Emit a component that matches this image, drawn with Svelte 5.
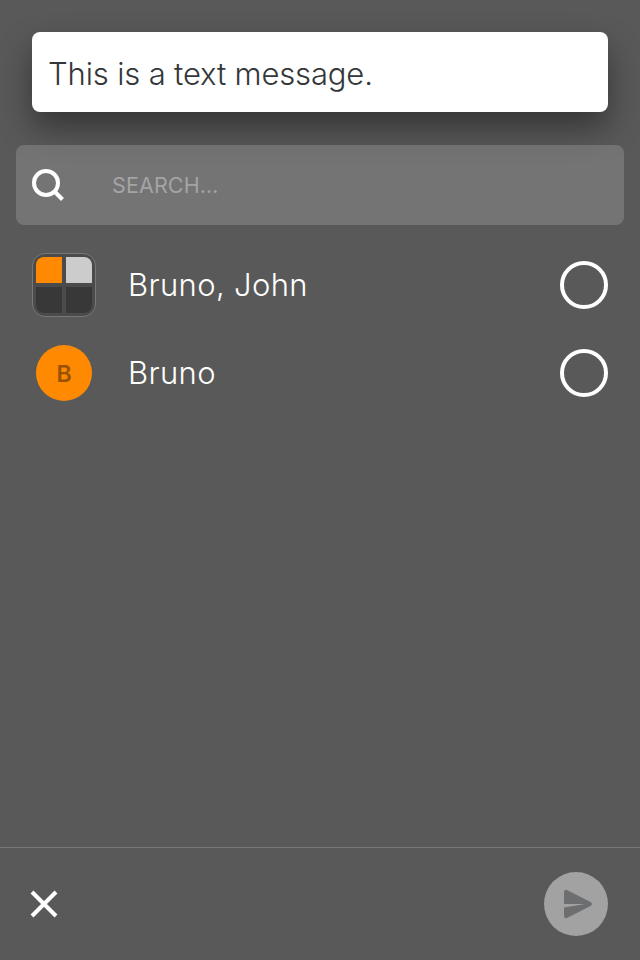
<script>
  const conversations = [
    { name: 'Bruno, John', group: true },
    { name: 'Bruno', group: false, initial: 'B' }
  ];
  let query = $state('');
</script>

<main class="share">
  <section class="preview"><span>This is a text message.</span></section>

  <label class="search">
    <svg width="34" height="34" viewBox="0 0 34 34" fill="none" stroke="#fff" stroke-width="4">
      <circle cx="15" cy="15" r="12" />
      <path d="M23.5 23.5L31.5 31.5" />
    </svg>
    <input type="text" placeholder="SEARCH…" aria-label="Search" bind:value={query} />
  </label>

  <ul class="list">
    {#each conversations as item}
      <li class="row">
        <div class="avatar">
          {#if item.group}
            <div class="grid"><i class="orange"></i><i class="light"></i><i></i><i></i></div>
          {:else}
            <div class="round">{item.initial}</div>
          {/if}
        </div>
        <span class="name">{item.name}</span>
        <span class="check"></span>
      </li>
    {/each}
  </ul>

  <footer class="bar">
    <button class="close" aria-label="Close">
      <svg width="28" height="28" viewBox="0 0 28 28" fill="none" stroke="#fff" stroke-width="4">
        <path d="M2 2L26 26M26 2L2 26" />
      </svg>
    </button>
    <button class="send" aria-label="Send">
      <svg width="64" height="64" viewBox="0 0 64 64" fill="#6c6e6f">
        <path d="M20 32V20.5Q20 16.8 23.5 18.3L46.5 30.1Q49.5 32 46.5 33.9L23.5 45.7Q20 47.2 20 43.5V35.5L41 32Z" />
      </svg>
    </button>
  </footer>
</main>

<style>
  :global(body) { background: #595959; }
  .share {
    box-sizing: border-box;
    height: 960px;
    padding-top: 32px;
    display: flex;
    flex-direction: column;
    background: #595959;
    font-family: Inter, sans-serif;
    font-weight: 300;
    overflow: hidden;
  }
  .preview {
    flex: none;
    height: 80px;
    margin: 0 32px;
    padding: 2px 16px 0;
    box-sizing: border-box;
    display: flex;
    align-items: center;
    border-radius: 8px;
    background: #fff;
    color: #33373a;
    font-size: 31px;
    letter-spacing: -0.15px;
    box-shadow: 0 16px 32px rgba(0, 0, 0, 0.4);
  }
  .search {
    flex: none;
    height: 80px;
    margin: 33px 16px 0;
    padding-left: 15px;
    box-sizing: border-box;
    display: flex;
    align-items: center;
    gap: 47px;
    border-radius: 8px;
    background: rgba(255, 255, 255, 0.165);
  }
  input {
    flex: 1;
    min-width: 0;
    padding: 0;
    border: 0;
    outline: 0;
    background: none;
    color: #fff;
    font: 400 21.5px Inter, sans-serif;
    letter-spacing: 0.12px;
  }
  input::placeholder { color: #a4a4a4; opacity: 1; }
  .list {
    flex: 1;
    margin: 16px 0 0;
    padding: 0;
    list-style: none;
  }
  .row {
    height: 88px;
    padding: 0 32px;
    display: flex;
    align-items: center;
  }
  .avatar {
    width: 64px;
    height: 64px;
    margin-right: 32px;
    display: flex;
    align-items: center;
    justify-content: center;
  }
  .grid {
    box-sizing: border-box;
    width: 64px;
    height: 64px;
    padding: 3px;
    display: grid;
    grid-template-columns: 26px 26px;
    grid-template-rows: 26px 26px;
    gap: 4px;
    border: 1px solid #777;
    border-radius: 13px;
    background: #4b4b4b;
  }
  .grid i { background: #383838; }
  .grid .orange { background: #ff8900; }
  .grid .light { background: #ccc; }
  .grid i:nth-child(1) { border-top-left-radius: 8px; }
  .grid i:nth-child(2) { border-top-right-radius: 8px; }
  .grid i:nth-child(3) { border-bottom-left-radius: 8px; }
  .grid i:nth-child(4) { border-bottom-right-radius: 8px; }
  .round {
    width: 56px;
    height: 56px;
    padding-top: 2px;
    box-sizing: border-box;
    display: flex;
    align-items: center;
    justify-content: center;
    border-radius: 50%;
    background: #ff8900;
    color: #995200;
    font-size: 23px;
    font-weight: 600;
  }
  .name {
    flex: 1;
    padding-bottom: 2px;
    color: #fff;
    font-size: 31px;
    letter-spacing: 0.35px;
  }
  .check {
    box-sizing: border-box;
    width: 48px;
    height: 48px;
    border: 4px solid #fff;
    border-radius: 50%;
  }
  .bar {
    flex: none;
    box-sizing: border-box;
    height: 113px;
    padding: 0 32px 0 30px;
    display: flex;
    align-items: center;
    justify-content: space-between;
    border-top: 1px solid #777;
  }
  button { padding: 0; border: 0; background: none; display: flex; }
  .send { border-radius: 50%; background: #a2a2a2; }
</style>
